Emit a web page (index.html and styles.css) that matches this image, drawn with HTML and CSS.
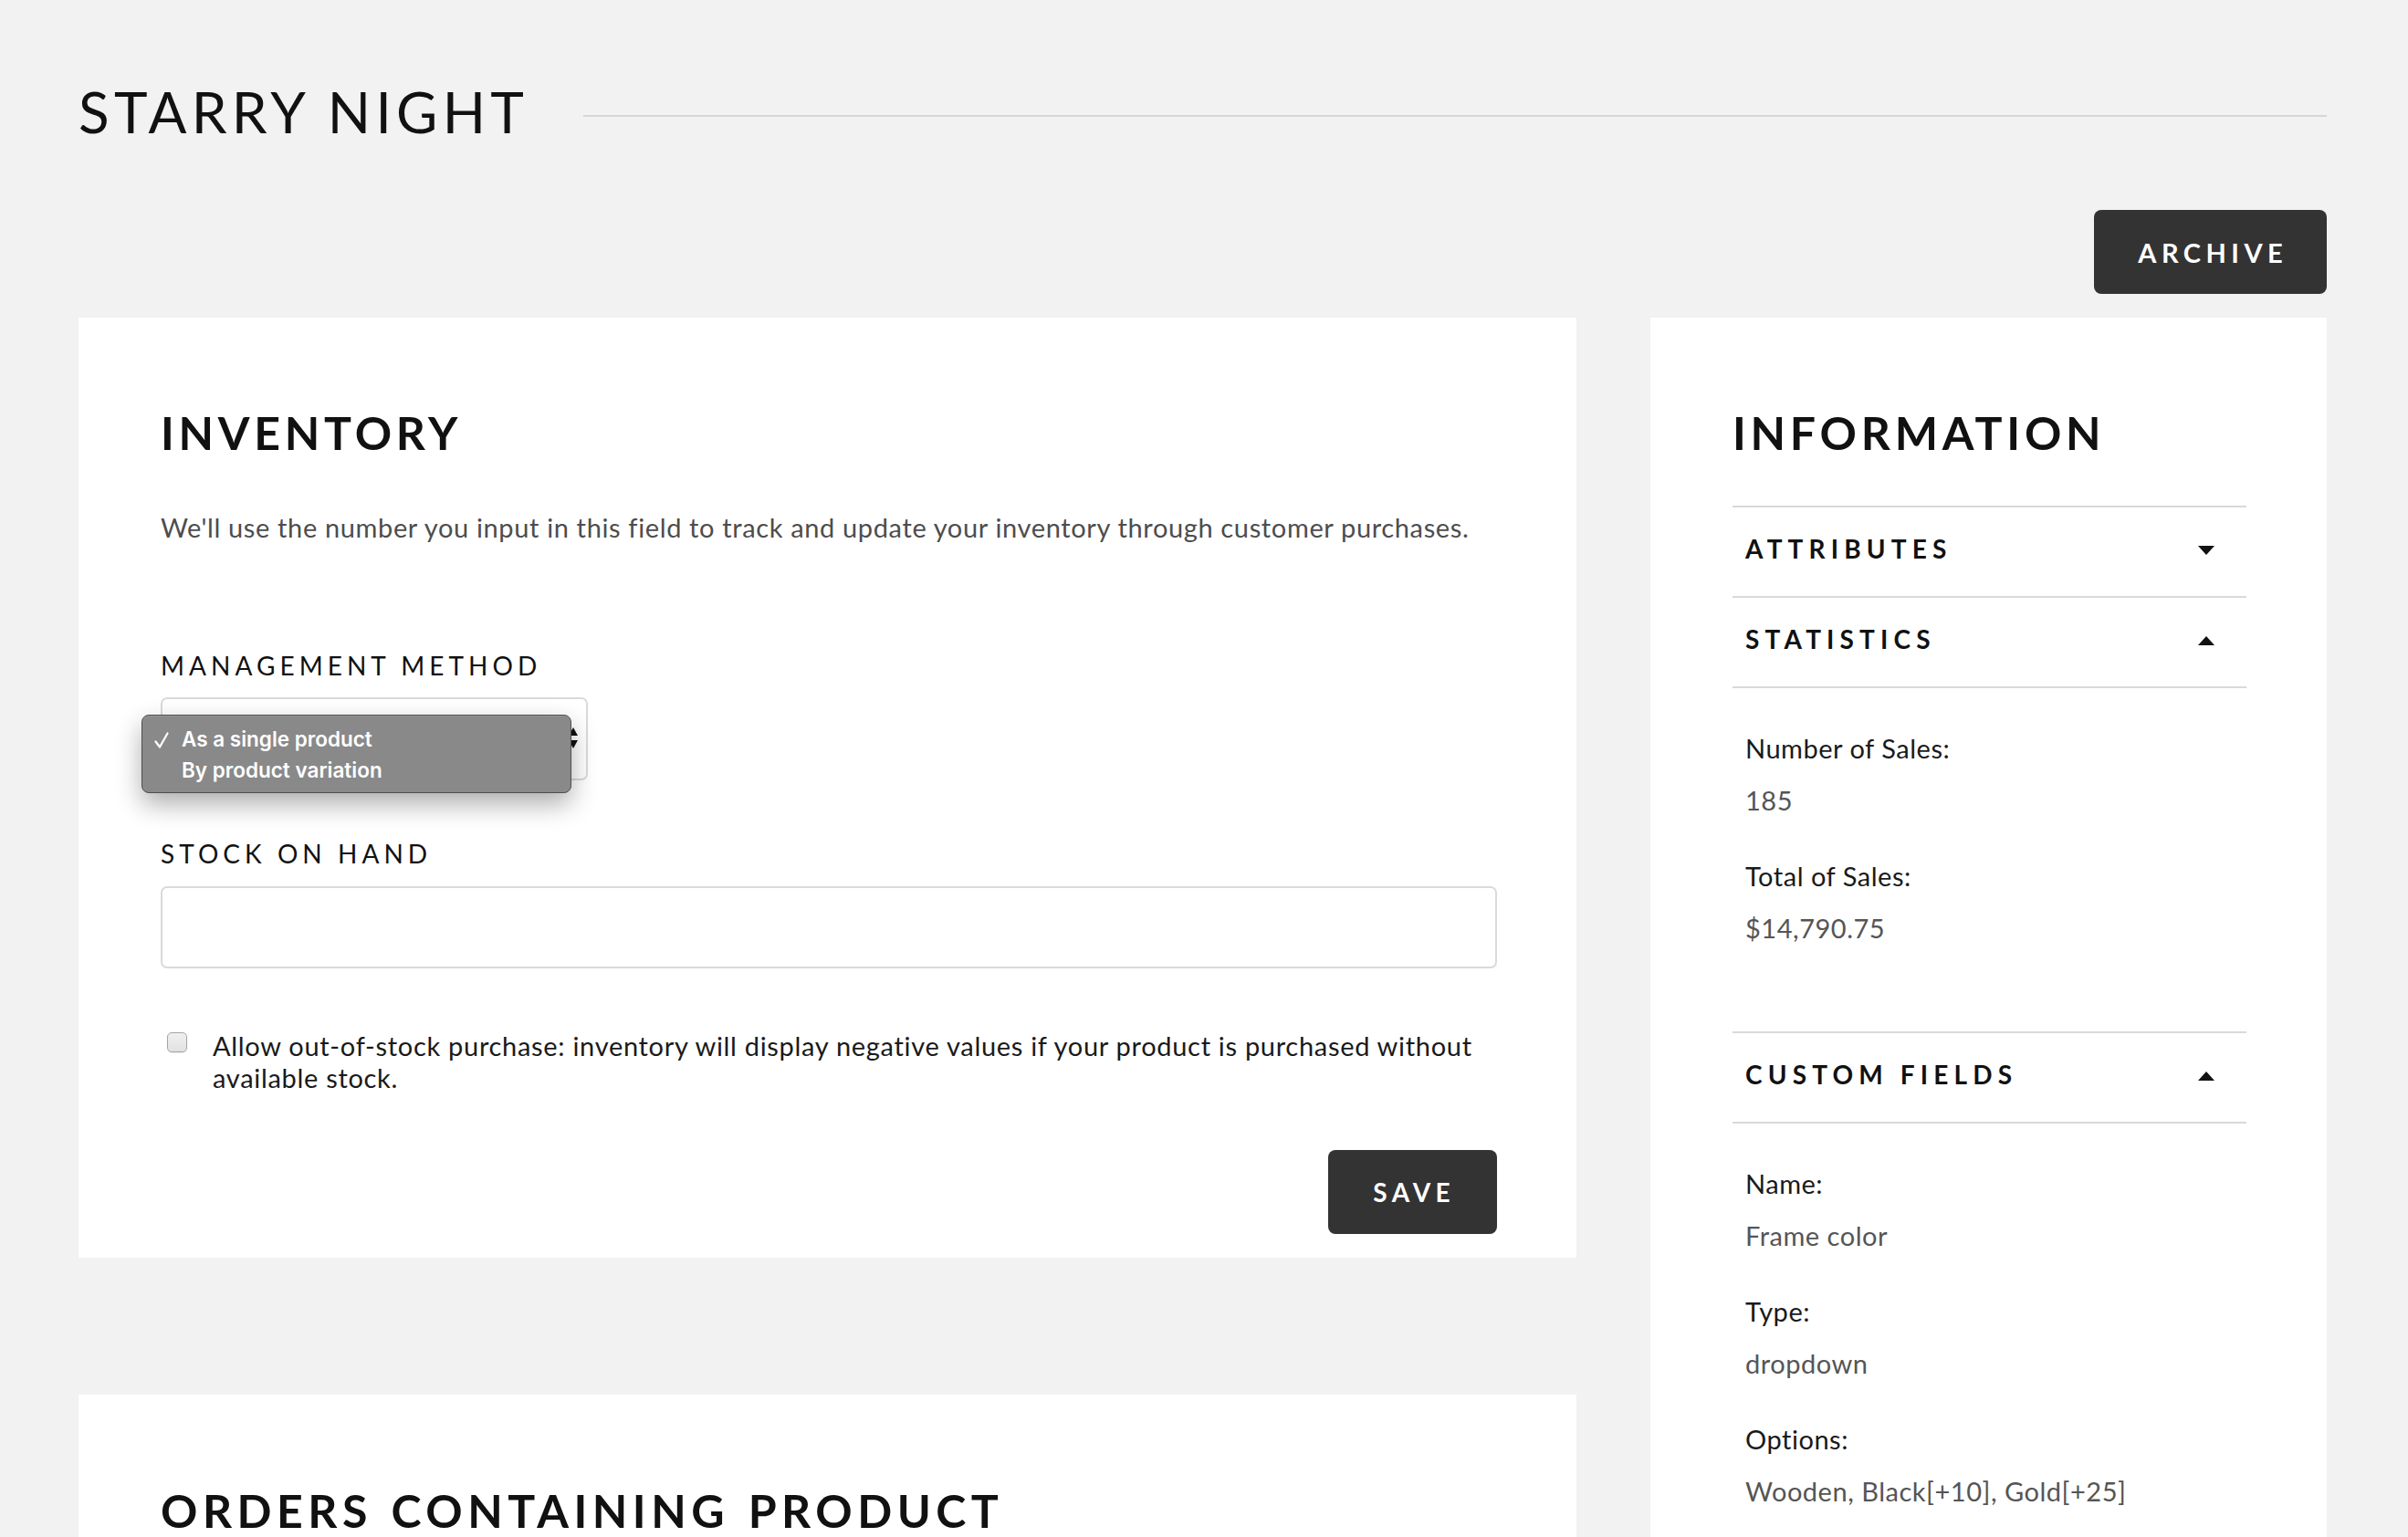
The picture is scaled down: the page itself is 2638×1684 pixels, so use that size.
FILE: index.html
```html
<!DOCTYPE html>
<html lang="en">
<head>
<meta charset="utf-8">
<title>Starry Night</title>
<link rel="stylesheet" href="styles.css">
</head>
<body>
<div class="page">
  <header class="page-header">
    <h1 class="page-title">STARRY NIGHT</h1>
    <div class="title-rule"></div>
  </header>
  <div class="actions">
    <button class="btn btn-archive">ARCHIVE</button>
  </div>
  <div class="layout">
    <div class="main-col">
      <section class="card inventory">
        <h2 class="card-title">INVENTORY</h2>
        <p class="desc">We'll use the number you input in this field to track and update your inventory through customer purchases.</p>
        <div class="field-label label-method">MANAGEMENT METHOD</div>
        <div class="select-wrap">
          <div class="select-box">
            <svg class="select-arrows" width="10" height="24" viewBox="0 0 10 24"><polygon points="5,0 10,9 0,9" fill="#111"/><polygon points="0,14 10,14 5,23" fill="#111"/></svg>
          </div>
          <div class="popup">
            <div class="popup-item"><svg class="check" width="16" height="18" viewBox="0 0 16 18"><path d="M1.5 10.5 L6 16.5 L14.5 1.5" fill="none" stroke="#fff" stroke-width="2.2" stroke-linecap="round" stroke-linejoin="round"/></svg>As a single product</div>
            <div class="popup-item">By product variation</div>
          </div>
        </div>
        <div class="field-label label-stock">STOCK ON HAND</div>
        <div class="text-input"></div>
        <label class="check-row">
          <span class="checkbox"></span>
          <span class="check-text">Allow out-of-stock purchase: inventory will display negative values if your product is purchased without available stock.</span>
        </label>
        <div class="save-row">
          <button class="btn btn-save">SAVE</button>
        </div>
      </section>
      <section class="card orders">
        <h2 class="card-title orders-title">ORDERS CONTAINING PRODUCT</h2>
      </section>
    </div>
    <aside class="card info">
      <h2 class="card-title">INFORMATION</h2>
      <div class="accordion">
        <div class="acc-head">
          <span>ATTRIBUTES</span>
          <svg class="tri" width="18" height="10" viewBox="0 0 18 10"><polygon points="0,0 18,0 9,10" fill="#111"/></svg>
        </div>
        <div class="acc-head">
          <span>STATISTICS</span>
          <svg class="tri" width="18" height="10" viewBox="0 0 18 10"><polygon points="9,0 18,10 0,10" fill="#111"/></svg>
        </div>
        <div class="acc-body">
          <p class="k">Number of Sales:</p>
          <p class="v">185</p>
          <p class="k">Total of Sales:</p>
          <p class="v">$14,790.75</p>
        </div>
        <div class="acc-head">
          <span>CUSTOM FIELDS</span>
          <svg class="tri" width="18" height="10" viewBox="0 0 18 10"><polygon points="9,0 18,10 0,10" fill="#111"/></svg>
        </div>
        <div class="acc-body">
          <p class="k">Name:</p>
          <p class="v">Frame color</p>
          <p class="k">Type:</p>
          <p class="v">dropdown</p>
          <p class="k">Options:</p>
          <p class="v">Wooden, Black[+10], Gold[+25]</p>
        </div>
      </div>
    </aside>
  </div>
</div>
</body>
</html>
```
FILE: styles.css
```css
* { box-sizing: border-box; }
html, body { margin: 0; padding: 0; }
body {
  background: #f2f2f2;
  font-family: "Lato", "Noto Sans", sans-serif;
  color: #111;
}
.page {
  padding: 85px 89px 0 86px;
}
.page-header {
  display: flex;
  align-items: flex-start;
}
.page-title {
  margin: 0;
  font-weight: 400;
  font-size: 62px;
  line-height: 74px;
  letter-spacing: 0.085em;
  color: #111;
  white-space: nowrap;
}
.title-rule {
  flex: 1;
  height: 2px;
  background: #d6d6d6;
  margin-left: 60px;
  margin-top: 41px;
}
.actions {
  display: flex;
  justify-content: flex-end;
  margin-top: 71px;
}
.btn {
  font-family: "Lato", sans-serif;
  font-weight: 700;
  color: #fff;
  background: #333;
  border: none;
  border-radius: 8px;
  height: 92px;
  padding: 0;
  text-align: center;
  cursor: pointer;
}
.btn-archive {
  width: 255px;
  font-size: 29px;
  letter-spacing: 0.19em;
  text-indent: 0.19em;
}
.btn-save {
  width: 185px;
  font-size: 28px;
  letter-spacing: 0.19em;
  text-indent: 0.12em;
}
.layout {
  display: grid;
  grid-template-columns: 1641px 741px;
  column-gap: 81px;
  margin-top: 26px;
  align-items: start;
}
.main-col {
  display: flex;
  flex-direction: column;
  gap: 150px;
}
.card {
  background: #fff;
}
.card-title {
  margin: 0;
  font-weight: 700;
  font-size: 50px;
  line-height: 50px;
  letter-spacing: 0.095em;
  color: #111;
  white-space: nowrap;
}
.orders-title {
  letter-spacing: 0.11em;
  word-spacing: 0.06em;
}
.inventory {
  padding: 101px 87px 26px 90px;
}
.orders {
  padding: 102px 87px 120px 90px;
}
.desc {
  margin: 59px 0 0;
  font-size: 29px;
  line-height: 40px;
  letter-spacing: 0.022em;
  color: #4d4d4d;
}
.field-label {
  font-size: 28px;
  line-height: 40px;
  letter-spacing: 0.18em;
  color: #111;
}
.label-method { margin-top: 111px; }
.label-stock { margin-top: 60px; }
.select-wrap {
  position: relative;
  width: 468px;
  margin-top: 15px;
}
.select-box {
  position: relative;
  height: 91px;
  border: 2px solid #dadada;
  border-radius: 7px;
  background: #fff;
}
.select-arrows {
  position: absolute;
  right: 9px;
  top: 31px;
}
.popup {
  position: absolute;
  left: -21px;
  top: 19px;
  width: 471px;
  height: 86px;
  background: #898989;
  border: 1px solid #4e4e4e;
  border-radius: 8px;
  box-shadow: inset 0 1px 0 rgba(255,255,255,0.12), 0 12px 28px rgba(0,0,0,0.32);
  padding: 9px 0 0 43px;
  font-family: "Inter", "Noto Sans", sans-serif;
  font-weight: 600;
  font-size: 22.5px;
  line-height: 34px;
  color: #fff;
}
.popup-item {
  position: relative;
  white-space: nowrap;
}
.check {
  position: absolute;
  left: -30px;
  top: 9px;
}
.text-input {
  margin-top: 16px;
  height: 90px;
  border: 2px solid #dadada;
  border-radius: 7px;
  background: #fff;
}
.check-row {
  display: flex;
  align-items: flex-start;
  margin-top: 67px;
}
.checkbox {
  flex: none;
  width: 22px;
  height: 22px;
  margin: 3px 0 0 7px;
  border: 1.5px solid #a5a5a5;
  border-radius: 5px;
  background: linear-gradient(#f0f0f0, #e2e2e2);
  box-shadow: 0 1px 1px rgba(0,0,0,0.08);
}
.check-text {
  margin-left: 28px;
  font-size: 29px;
  line-height: 35px;
  letter-spacing: 0.024em;
  color: #1a1a1a;
}
.save-row {
  display: flex;
  justify-content: flex-end;
  margin-top: 62px;
}
.info {
  padding: 101px 88px 140px 90px;
}
.accordion {
  margin-top: 55px;
}
.acc-head {
  display: flex;
  justify-content: space-between;
  align-items: center;
  border-top: 2px solid #d9d9d9;
  border-bottom: 2px solid #d9d9d9;
  padding: 25px 35px 32px 14px;
  font-weight: 700;
  font-size: 28px;
  line-height: 40px;
  letter-spacing: 0.22em;
  color: #111;
}
.acc-head + .acc-head {
  border-top: none;
}
.acc-head .tri {
  flex: none;
  margin-top: 4px;
}
.acc-body {
  padding: 46px 14px 93px;
}
.acc-body p {
  margin: 0;
  font-size: 29px;
  line-height: 40px;
  letter-spacing: 0.018em;
}
.acc-body .k {
  color: #1a1a1a;
}
.acc-body .v {
  margin-top: 17px;
  color: #555;
}
.acc-body .v + .k {
  margin-top: 43px;
}
```
